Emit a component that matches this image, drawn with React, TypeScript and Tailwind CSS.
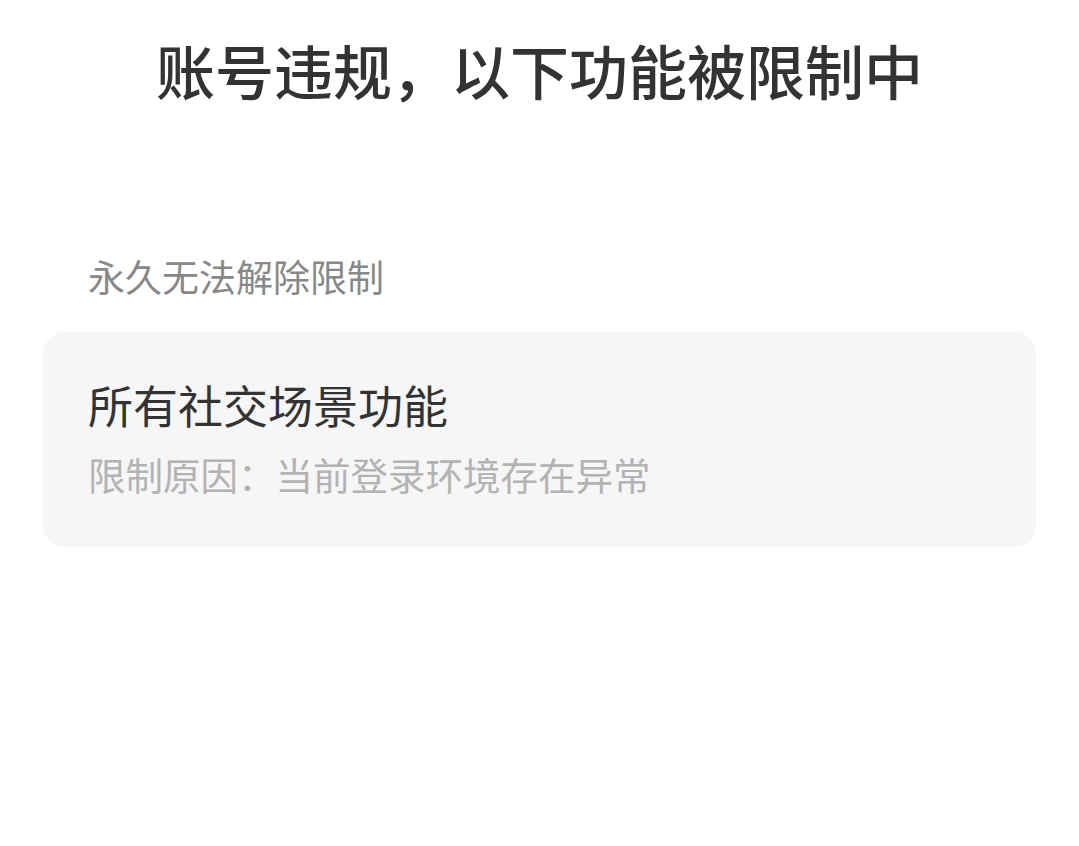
export default function App() {
  return (
    <div
      className="min-h-[846px] bg-white"
      style={{ fontFamily: '"Noto Sans CJK SC", "Noto Sans", sans-serif' }}
    >
      <h1 className="pt-[40px] text-center text-[59px] font-medium leading-[59px] text-[#333333]">
        账号违规，以下功能被限制中
      </h1>

      <div className="px-[43px] pt-[159px]">
        <p className="px-[45px] text-[37px] leading-[37px] text-[#888888]">永久无法解除限制</p>

        <div className="mt-[37px] h-[215px] rounded-[22px] bg-[#f6f6f6] px-[45px] pt-[50px]">
          <p className="text-[45px] leading-[45px] text-[#333333]">所有社交场景功能</p>
          <p className="mt-[28px] text-[37.5px] leading-[37px] text-[#b3b3b3]">
            限制原因：当前登录环境存在异常
          </p>
        </div>
      </div>
    </div>
  );
}
